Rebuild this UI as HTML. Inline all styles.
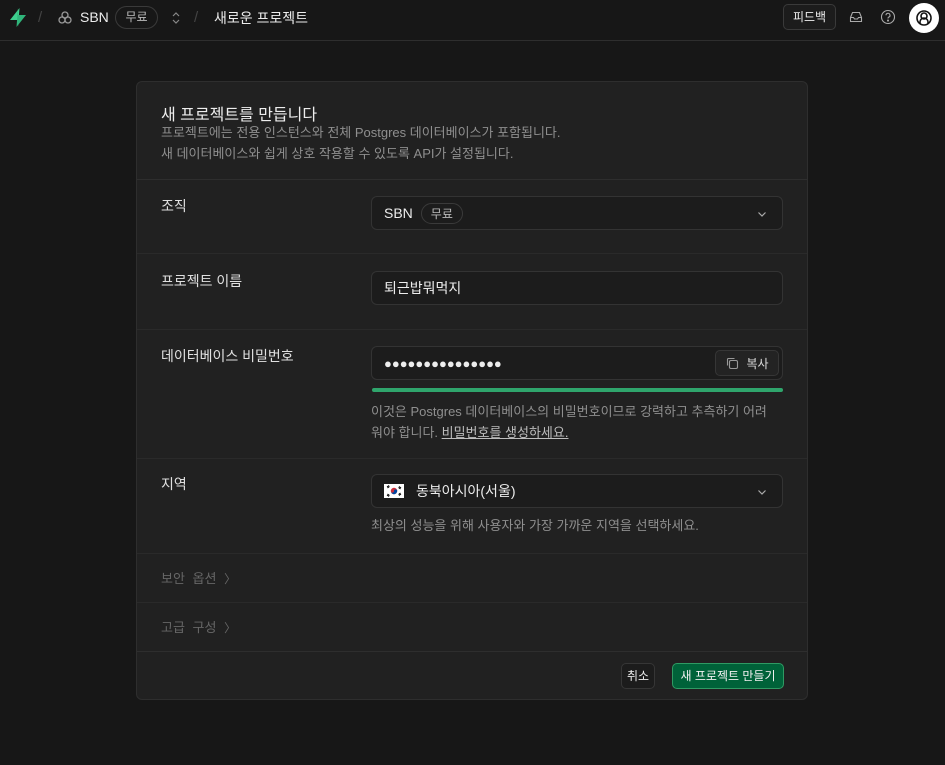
<!DOCTYPE html>
<html><head><meta charset="utf-8">
<style>
*{box-sizing:border-box;margin:0;padding:0}
body{width:945px;height:765px;background:#171717;font-family:"Liberation Sans","Noto Sans CJK KR",sans-serif;color:#ededed;position:relative;overflow:hidden;font-size:14px}
.top{position:absolute;left:0;top:0;width:945px;height:41px;border-bottom:1px solid #2e2e2e;background:#171717}
.abs{position:absolute}
.card{position:absolute;left:136px;top:81px;width:672px;height:619px;background:#212121;border:1px solid #2e2e2e;border-radius:6px;overflow:hidden}
.sep{position:absolute;left:0;width:100%;height:1px;background:#2a2a2a}
.lbl{position:absolute;left:24px;font-size:14px;color:#e0e0e0}
.inp{position:absolute;left:234px;width:412px;height:34px;background:#1c1c1c;border:1px solid #333;border-radius:6px;font-size:14px;color:#ededed;padding:0 12px;display:flex;align-items:center}
.help{position:absolute;left:234px;font-size:13px;color:#8f8f8f;line-height:21px}
.pill{border:1px solid #3a3a3a;border-radius:12px;font-size:12px;color:#bbb;padding:1px 9px;margin-left:8px}
.chev{position:absolute;right:14px;top:11px}
</style></head><body>
<div class="top">
  <svg class="abs" style="left:8px;top:7px" width="20" height="21" viewBox="0 0 20 21"><path d="M11.5 1L2 13h8v7z" fill="#3ecf8e"/><path d="M8.5 20L18 8h-8V1z" fill="#2fb57a"/></svg>
  <div class="abs" style="left:38px;top:9px;color:#444;font-size:15px">/</div>
  <svg class="abs" style="left:57px;top:10px" width="16" height="16" viewBox="0 0 16 16" fill="none" stroke="#999" stroke-width="1.3"><circle cx="8" cy="5" r="3"/><circle cx="5" cy="10" r="3"/><circle cx="11" cy="10" r="3"/></svg>
  <div class="abs" style="left:80px;top:9px;font-size:14px">SBN</div>
  <div class="abs" style="left:115px;top:6px;width:43px;height:23px;border:1px solid #3a3a3a;border-radius:12px;font-size:12px;color:#bbb;text-align:center;line-height:21px">무료</div>
  <svg class="abs" style="left:170px;top:10px" width="12" height="16" viewBox="0 0 12 16" fill="none" stroke="#888" stroke-width="1.2"><path d="M3 6l3-3 3 3M3 10l3 3 3-3"/></svg>
  <div class="abs" style="left:194px;top:9px;color:#444;font-size:15px">/</div>
  <div class="abs" style="left:214px;top:8px;font-size:14px">새로운 프로젝트</div>
  <div class="abs" style="left:783px;top:4px;width:53px;height:26px;border:1px solid #3a3a3a;border-radius:5px;font-size:12px;text-align:center;line-height:24px;background:#1c1c1c">피드백</div>
  <svg class="abs" style="left:849px;top:10px" width="14" height="14" viewBox="0 0 14 14" fill="none" stroke="#aaa" stroke-width="1.1"><path d="M1.5 7.5L3.5 2.5h7l2 5v4h-11z M1.5 7.5h3l1 1.5h3l1-1.5h3"/></svg>
  <svg class="abs" style="left:880px;top:9px" width="16" height="16" viewBox="0 0 16 16" fill="none" stroke="#aaa" stroke-width="1.1"><circle cx="8" cy="8" r="6.5"/><path d="M6 6.3a2 2 0 1 1 2.5 1.9c-.5.2-.5.6-.5 1.3"/><circle cx="8" cy="11.6" r=".5" fill="#aaa"/></svg>
  <div class="abs" style="left:909px;top:3px;width:30px;height:30px;border-radius:50%;background:#fff"></div>
  <svg class="abs" style="left:914px;top:8px" width="20" height="20" viewBox="0 0 20 20" fill="none" stroke="#111" stroke-width="1.6"><circle cx="10" cy="10" r="7"/><circle cx="10" cy="8" r="3"/><path d="M6 16v-2a4 4 0 0 1 8 0v2"/></svg>
</div>

<div class="card">
  <div class="abs" style="left:24px;top:19px;font-size:16px;color:#ededed">새 프로젝트를 만듭니다</div>
  <div class="abs" style="left:24px;top:40px;font-size:13px;color:#8f8f8f;line-height:21px">프로젝트에는 전용 인스턴스와 전체 Postgres 데이터베이스가 포함됩니다.<br>새 데이터베이스와 쉽게 상호 작용할 수 있도록 API가 설정됩니다.</div>
  <div class="sep" style="top:97px;background:#2e2e2e"></div>

  <div class="lbl" style="top:114px">조직</div>
  <div class="inp" style="top:114px">SBN<span class="pill">무료</span>
    <svg class="chev" width="12" height="12" viewBox="0 0 12 12" fill="none" stroke="#aaa" stroke-width="1.2"><path d="M2.5 4.5L6 8l3.5-3.5"/></svg></div>
  <div class="sep" style="top:171px"></div>

  <div class="lbl" style="top:189px">프로젝트 이름</div>
  <div class="inp" style="top:189px">퇴근밥뭐먹지</div>
  <div class="sep" style="top:247px"></div>

  <div class="lbl" style="top:264px">데이터베이스 비밀번호</div>
  <div class="inp" style="top:264px;font-size:13px">●●●●●●●●●●●●●●●
    <div class="abs" style="right:3px;top:3px;width:64px;height:26px;border:1px solid #363636;border-radius:5px;background:#232323;font-size:12px;display:flex;align-items:center;justify-content:center;gap:7px;color:#ddd">
      <svg width="14" height="14" viewBox="0 0 14 14" fill="none" stroke="#999" stroke-width="1.1"><rect x="4.5" y="4.5" width="8" height="8" rx="1.5"/><path d="M2.5 9.5v-6a1 1 0 0 1 1-1h6"/></svg>복사</div>
  </div>
  <div class="abs" style="left:235px;top:306px;width:411px;height:4px;border-radius:2px;background:#2fa56c"></div>
  <div class="help" style="top:319px">이것은 Postgres 데이터베이스의 비밀번호이므로 강력하고 추측하기 어려<br>워야 합니다. <span style="color:#bdbdbd;text-decoration:underline">비밀번호를 생성하세요.</span></div>
  <div class="sep" style="top:376px"></div>

  <div class="lbl" style="top:392px">지역</div>
  <div class="inp" style="top:392px">
    <svg width="20" height="14" viewBox="0 0 20 14" style="margin-right:12px"><rect width="20" height="14" fill="#fff"/><circle cx="10" cy="7" r="3.2" fill="#cd2e3a"/><path d="M6.8 7a3.2 3.2 0 0 0 6.4 0a1.6 1.6 0 0 0-3.2 0a1.6 1.6 0 0 1-3.2 0z" fill="#0047a0"/><g stroke="#000" stroke-width="1"><path d="M3 3l2-1.5M3.5 4l2-1.5M15 2.5l2 1.5M14.5 3.5l2 1.5M3 11l2 1.5M3.5 10l2 1.5M15 11.5l2-1.5M14.5 10.5l2-1.5"/></g></svg>동북아시아(서울)
    <svg class="chev" width="12" height="12" viewBox="0 0 12 12" fill="none" stroke="#aaa" stroke-width="1.2"><path d="M2.5 4.5L6 8l3.5-3.5"/></svg></div>
  <div class="help" style="top:433px">최상의 성능을 위해 사용자와 가장 가까운 지역을 선택하세요.</div>
  <div class="sep" style="top:471px"></div>

  <div class="abs" style="left:24px;top:486px;font-size:13px;color:#666;word-spacing:4px">보안 옵션 <span style="font-size:12px">〉</span></div>
  <div class="sep" style="top:520px"></div>
  <div class="abs" style="left:24px;top:535px;font-size:13px;color:#666;word-spacing:4px">고급 구성 <span style="font-size:12px">〉</span></div>
  <div class="sep" style="top:569px;background:#2e2e2e"></div>

  <div class="abs" style="left:484px;top:581px;width:34px;height:26px;border:1px solid #363636;border-radius:5px;background:#1c1c1c;font-size:12px;text-align:center;line-height:24px">취소</div>
  <div class="abs" style="left:535px;top:581px;width:112px;height:26px;border:1px solid #2f9a63;border-radius:5px;background:#006239;font-size:12px;text-align:center;line-height:24px;color:#f0f0f0">새 프로젝트 만들기</div>
</div>
</body></html>
